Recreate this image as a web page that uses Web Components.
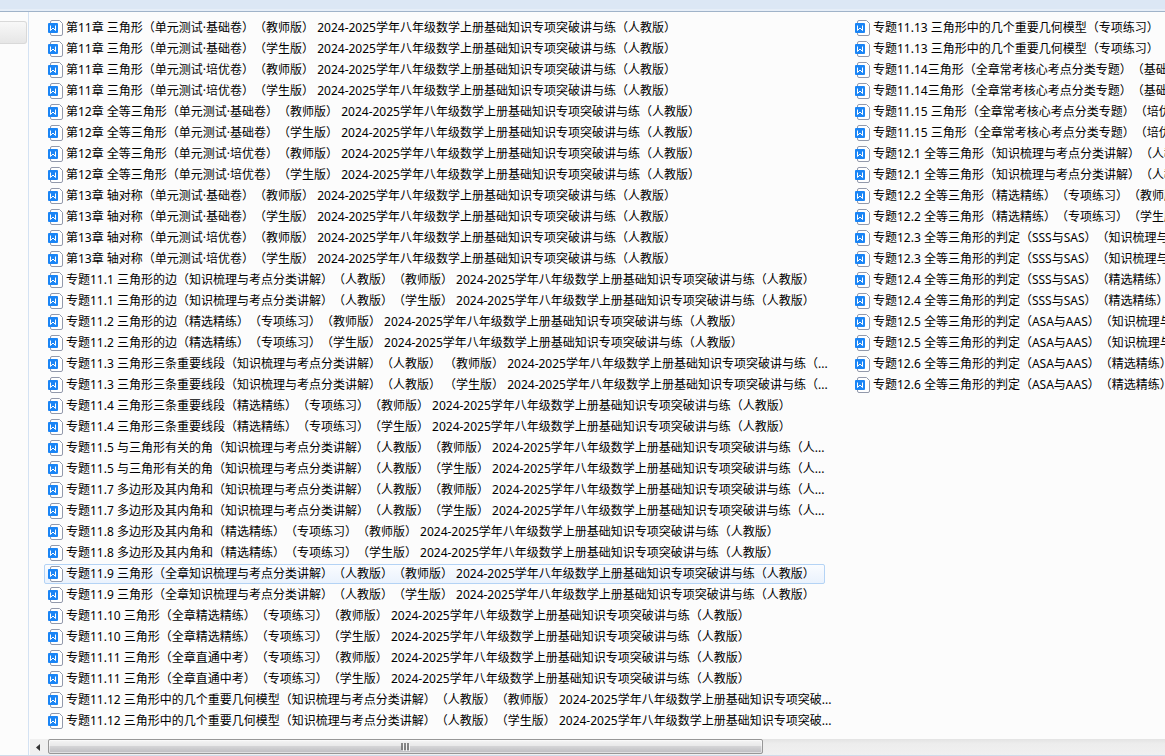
<!DOCTYPE html>
<html lang="zh-CN">
<head>
<meta charset="utf-8">
<meta name="viewport" content="width=device-width, initial-scale=1">
<title>文件列表</title>
<style>
  html, body { margin: 0; height: 100%; overflow: hidden; }
  body { font: 12px/20px "Noto Sans", "Noto Sans CJK SC", sans-serif; color: #000; background: #fcfcfc; }
</style>
</head>
<body>
<file-window></file-window>

<script>
// A document icon: outlined page with a blue "W" badge over its left side.
class DocIcon extends HTMLElement {
  constructor() {
    super();
    this.attachShadow({ mode: "open" }).innerHTML = `
      <style>
        :host { display: block; flex: none; width: 16px; height: 16px; }
        svg { display: block; }
      </style>
      <svg width="16" height="16" viewBox="0 0 16 16" aria-hidden="true">
        <path d="M4 .5h7.500L14.500 3.500v10.500q0 1.500-1.500 1.500H4q-1.500 0-1.500-1.500V2Q2.500 .5 4 .5z" fill="#fff" stroke="#9299ab"/>
        <rect x="0" y="3" width="10" height="10" rx="1" fill="#1b85f5"/>
        <path d="M2.500 5.500v5L5 8l2.500 2.500v-5" fill="none" stroke="#fff"/>
      </svg>`;
  }
}
customElements.define("doc-icon", DocIcon);

class FileItem extends HTMLElement {
  constructor() {
    super();
    this.attachShadow({ mode: "open" }).innerHTML = `
      <style>
        :host { display: flex; align-items: center; gap: 2px; box-sizing: border-box; width: max-content;
                height: 20px; padding: 0 9px 0 3px; border: 1px solid transparent; border-radius: 2px; }
        :host([hot]) { border-color: #b4d3f5; background: linear-gradient(#fafcff, #eaf2fd); }
        .name { white-space: pre; line-height: 18px; text-spacing-trim: space-all; }
      </style>
      <doc-icon></doc-icon>
      <span class="name"><slot></slot></span>`;
  }
}
customElements.define("file-item", FileItem);

class FileList extends HTMLElement {
  constructor() {
    super();
    this.attachShadow({ mode: "open" }).innerHTML = `
      <style>
        :host { display: block; min-height: 0; overflow: hidden; padding: 6px 0 0 15px; }
        ul { height: 100%; margin: 0; padding: 0; list-style: none; display: grid; grid-auto-flow: column;
             grid-template-rows: repeat(auto-fill, 20px); grid-auto-columns: 797px; gap: 1px 10px; }
        li { min-width: 0; }
      </style>
      <ul></ul>`;
  }
  set files(names) {
    this.shadowRoot.querySelector("ul").replaceChildren(...names.map(name => {
      const li = document.createElement("li");
      const item = document.createElement("file-item");
      item.textContent = name;
      item.toggleAttribute("hot", name === HOT);
      li.append(item);
      return li;
    }));
  }
}
customElements.define("file-list", FileList);

class ScrollStrip extends HTMLElement {
  constructor() {
    super();
    this.attachShadow({ mode: "open" }).innerHTML = `
      <style>
        :host { display: flex; height: 16px; margin-left: 1px; overflow: hidden; background: linear-gradient(#e3e3e3, #ededed 30%, #f0f0f0); }
        button { flex: none; width: 18px; height: 16px; padding: 0 2px 0 0; border: 0; background: #f0f0f0; display: grid; place-items: center; }
        .thumb { box-sizing: border-box; width: 63%; height: 15px; border: 1px solid #979797; border-radius: 2px;
                 display: grid; place-items: center; box-shadow: inset 0 0 0 1px #ffffff80;
                 background: linear-gradient(#f5f5f5, #e8e8e9 45%, #d4d4d6 50%, #bdbdc1); }
        svg { display: block; }
      </style>
      <button aria-label="向左滚动"><svg width="4" height="7" viewBox="0 0 4 7"><path d="M0 3.500 4 0v7z" fill="#333"/></svg></button>
      <div class="thumb">
        <svg width="9" height="8" viewBox="0 0 9 8">
          <path d="M2.500 1v7M5.500 1v7M8.500 1v7" stroke="#f4f4f4"/>
          <path d="M1 0v7M4 0v7M7 0v7" stroke="#666" stroke-width="1.500"/>
        </svg>
      </div>`;
  }
}
customElements.define("scroll-strip", ScrollStrip);

class SidePane extends HTMLElement {
  constructor() {
    super();
    this.attachShadow({ mode: "open" }).innerHTML = `
      <style>
        :host { display: block; box-sizing: border-box; padding-top: 9px; border-right: 1px solid #d4e2f3; }
        button { display: block; width: 27px; height: 23px; padding: 0; border: 1px solid #d9d9d9; border-left: 0;
                 border-radius: 0 3px 3px 0; background: linear-gradient(#f8f8f8, #e6e6e6); }
      </style>
      <button aria-label="当前文件夹"></button>`;
  }
}
customElements.define("side-pane", SidePane);

class FileWindow extends HTMLElement {
  constructor() {
    super();
    this.attachShadow({ mode: "open" }).innerHTML = `
      <style>
        :host { display: grid; height: 100vh; grid-template: 12px minmax(0, 1fr) 1px / 29px minmax(0, 1fr); }
        header { grid-column: 1 / -1; box-sizing: border-box; border-bottom: 1px solid #a0b3c9; background: linear-gradient(#dce7f5 9px, #e6eef8 9px); }
        main { display: grid; grid-template-rows: minmax(0, 1fr) 16px; }
        footer { grid-column: 1 / -1; background: #d0dbea; }
      </style>
      <header></header>
      <side-pane></side-pane>
      <main><file-list></file-list><scroll-strip></scroll-strip></main>
      <footer></footer>`;
    this.shadowRoot.querySelector("file-list").files = FILES;
  }
}

const SUFFIX = " 2024-2025学年八年级数学上册基础知识专项突破讲与练（人教版）";
const CUT = (n) => SUFFIX.slice(0, SUFFIX.length - n) + "...";
const both = (stem, tail = SUFFIX) => ["教师版", "学生版"].map(v => `${stem}（${v}）${tail}`);

const HOT = "专题11.9 三角形（全章知识梳理与考点分类讲解）（人教版）（教师版）" + SUFFIX;
const FILES = [
  ...both("第11章 三角形（单元测试·基础卷）"),
  ...both("第11章 三角形（单元测试·培优卷）"),
  ...both("第12章 全等三角形（单元测试·基础卷）"),
  ...both("第12章 全等三角形（单元测试·培优卷）"),
  ...both("第13章 轴对称（单元测试·基础卷）"),
  ...both("第13章 轴对称（单元测试·培优卷）"),
  ...both("专题11.1 三角形的边（知识梳理与考点分类讲解）（人教版）"),
  ...both("专题11.2 三角形的边（精选精练）（专项练习）"),
  ...both("专题11.3 三角形三条重要线段（知识梳理与考点分类讲解）（人教版） ", CUT(4)),
  ...both("专题11.4 三角形三条重要线段（精选精练）（专项练习）"),
  ...both("专题11.5 与三角形有关的角（知识梳理与考点分类讲解）（人教版）", CUT(3)),
  ...both("专题11.7 多边形及其内角和（知识梳理与考点分类讲解）（人教版）", CUT(3)),
  ...both("专题11.8 多边形及其内角和（精选精练）（专项练习）"),
  ...both("专题11.9 三角形（全章知识梳理与考点分类讲解）（人教版）"),
  ...both("专题11.10 三角形（全章精选精练）（专项练习）"),
  ...both("专题11.11 三角形（全章直通中考）（专项练习）"),
  ...both("专题11.12 三角形中的几个重要几何模型（知识梳理与考点分类讲解）（人教版）", CUT(8)),
  ...both("专题11.13 三角形中的几个重要几何模型（专项练习）"),
  ...both("专题11.14三角形（全章常考核心考点分类专题）（基础练）"),
  ...both("专题11.15 三角形（全章常考核心考点分类专题）（培优练）"),
  ...both("专题12.1 全等三角形（知识梳理与考点分类讲解）（人教版）"),
  ...both("专题12.2 全等三角形（精选精练）（专项练习）"),
  ...both("专题12.3 全等三角形的判定（SSS与SAS）（知识梳理与考点分类讲解）"),
  ...both("专题12.4 全等三角形的判定（SSS与SAS）（精选精练）"),
  ...both("专题12.5 全等三角形的判定（ASA与AAS）（知识梳理与考点分类讲解）"),
  ...both("专题12.6 全等三角形的判定（ASA与AAS）（精选精练）"),
];
customElements.define("file-window", FileWindow);
</script>
</body>
</html>
